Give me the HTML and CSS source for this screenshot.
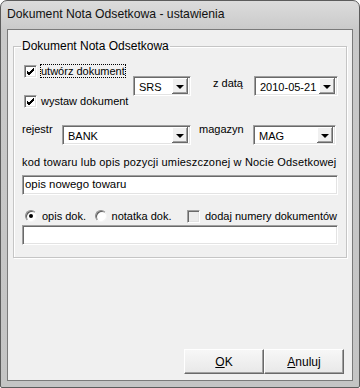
FILE: index.html
```html
<!DOCTYPE html>
<html lang="pl">
<head>
    <meta charset="UTF-8">
    <title>Dokument Nota Odsetkowa - ustawienia</title>
    <link rel="stylesheet" href="styles.css">
</head>
<body>
    <div class="window">
        <div class="titlebar">Dokument Nota Odsetkowa - ustawienia</div>

        <div class="client">
            <fieldset class="group">
                <legend>Dokument Nota Odsetkowa</legend>

                <div class="row row-top">
                    <div class="checks">
                        <div class="check">
                            <span class="box checked"><svg width="9" height="9" viewBox="0 0 9 9"><path d="M1 4 L3 6 L8 1 M1 5 L3 7 L8 2 M1 6 L3 8 L8 3" stroke="#000" stroke-width="1" fill="none"/></svg></span>
                            <span class="text focus">utwórz dokument</span>
                        </div>
                        <div class="check">
                            <span class="box checked"><svg width="9" height="9" viewBox="0 0 9 9"><path d="M1 4 L3 6 L8 1 M1 5 L3 7 L8 2 M1 6 L3 8 L8 3" stroke="#000" stroke-width="1" fill="none"/></svg></span>
                            <span class="text">wystaw dokument</span>
                        </div>
                    </div>
                    <div class="combo combo-srs"><span class="value">SRS</span><span class="drop"></span></div>
                    <span class="lbl lbl-date">z datą</span>
                    <div class="combo combo-date"><span class="value">2010-05-21</span><span class="drop"></span></div>
                </div>

                <div class="row row-reg">
                    <span class="lbl lbl-reg">rejestr</span>
                    <div class="combo combo-bank"><span class="value">BANK</span><span class="drop"></span></div>
                    <span class="lbl lbl-mag">magazyn</span>
                    <div class="combo combo-mag"><span class="value">MAG</span><span class="drop"></span></div>
                </div>

                <div class="caption">kod towaru lub opis pozycji umieszczonej w Nocie Odsetkowej</div>
                <div class="edit">opis nowego towaru</div>

                <div class="row row-opts">
                    <span class="radio on"></span>
                    <span class="text opt-1">opis dok.</span>
                    <span class="radio"></span>
                    <span class="text opt-2">notatka dok.</span>
                    <span class="box box-off"></span>
                    <span class="text">dodaj numery dokumentów</span>
                </div>
                <div class="edit edit-note"></div>
            </fieldset>

            <div class="buttons">
                <button class="btn"><u>O</u>K</button>
                <button class="btn"><u>A</u>nuluj</button>
            </div>
        </div>
    </div>
</body>
</html>
```

FILE: styles.css
```css
body {
    margin: 0;
    background: #fff;
    font-family: "Liberation Sans", Arial, sans-serif;
    font-size: 11px;
    color: #000;
}

.window {
    width: 358px;
    height: 386px;
    border: 1px solid #5c5c5c;
    border-radius: 7px 7px 2px 2px;
    background: linear-gradient(#dcdcdc, #c9c9c9 30px, #c4c4c4);
    display: flex;
    flex-direction: column;
}

.titlebar {
    height: 28px;
    line-height: 27px;
    padding-left: 6px;
    font-size: 12.2px;
    color: #111;
}

.client {
    flex: 1;
    margin: 0 6px 6px 6px;
    border: 1px solid #7a7a7a;
    background: #f0f0f0;
    display: flex;
    flex-direction: column;
}

/* group box */
.group {
    margin: 9px 5px 0 5px;
    padding: 10px 8px 12px 8px;
    border: 1px solid #c5c5c5;
    box-shadow: inset 1px 1px 0 #fff, 1px 1px 0 #fff;
    min-width: 0;
}
.group legend {
    padding: 0 1px;
    margin-left: -1px;
    font-size: 12px;
}

.row {
    display: flex;
    align-items: center;
}

.checks {
    width: 111px;
    display: flex;
    flex-direction: column;
    gap: 14px;
}
.check {
    display: flex;
    align-items: center;
    height: 16px;
}

.box {
    width: 11px;
    height: 11px;
    margin: 0 3px 0 2px;
    background: #fff;
    border: 1px solid;
    border-color: #a0a0a0 #fff #fff #a0a0a0;
    box-shadow: inset 1px 1px 0 #696969, inset -1px -1px 0 #e3e3e3;
    display: flex;
    align-items: center;
    justify-content: center;
    flex-shrink: 0;
}
.box svg {
    display: block;
}
.box-off {
    margin: 0 4px 0 0;
    background: #ececec;
}

.text {
    padding: 1px 1px;
    white-space: nowrap;
}
.focus {
    outline: 1px dotted #000;
    outline-offset: -1px;
}

/* combos */
.combo {
    height: 16px;
    display: flex;
    align-items: center;
    background: #fff;
    border: 1px solid;
    border-color: #a0a0a0 #fff #fff #a0a0a0;
    box-shadow: inset 1px 1px 0 #696969, inset -1px -1px 0 #e3e3e3;
    padding: 1px 2px 1px 2px;
}
.combo .value {
    flex: 1;
    padding: 2px 0 0 3px;
    white-space: nowrap;
    overflow: hidden;
}
.drop {
    width: 16px;
    height: 16px;
    background: #f0f0f0;
    box-shadow: inset -1px -1px 0 #696969, inset 1px 1px 0 #fff, inset -2px -2px 0 #a0a0a0;
    display: flex;
    align-items: center;
    justify-content: center;
    flex-shrink: 0;
}
.drop::before {
    content: '';
    border-left: 4px solid transparent;
    border-right: 4px solid transparent;
    border-top: 4px solid #000;
    margin-top: 1px;
}
.combo-srs {
    width: 52px;
}
.lbl {
    white-space: nowrap;
    align-self: flex-start;
}
.lbl-date {
    width: 41px;
    margin: 0 0 0 22px;
    padding-top: 14px;
}
.combo-date {
    width: 78px;
}

.row-reg {
    margin-top: 14px;
    align-items: flex-start;
}
.row-reg .combo {
    margin-top: 2px;
}
.lbl-reg {
    width: 40px;
}
.combo-bank {
    width: 123px;
}
.lbl-mag {
    width: 54px;
    margin-left: 8px;
}
.combo-mag {
    width: 77px;
}

.caption {
    margin-top: 11px;
    white-space: nowrap;
    letter-spacing: 0.18px;
}

.edit {
    height: 16px;
    margin-top: 7px;
    background: #fff;
    border: 1px solid;
    border-color: #a0a0a0 #fff #fff #a0a0a0;
    box-shadow: inset 1px 1px 0 #696969, inset -1px -1px 0 #e3e3e3;
    padding: 2px 2px 0 2px;
    font-size: 11.4px;
}

.row-opts {
    margin-top: 13px;
    height: 16px;
}
.radio {
    width: 10px;
    height: 10px;
    margin: 0 4px 0 3px;
    border-radius: 50%;
    background: #fff;
    border: 1px solid;
    border-color: #8a8a8a #f4f4f4 #f4f4f4 #8a8a8a;
    box-shadow: inset 1px 1px 0 #5a5a5a;
    position: relative;
    flex-shrink: 0;
}
.radio.on::after {
    content: '';
    position: absolute;
    left: 3px;
    top: 3px;
    width: 4px;
    height: 4px;
    border-radius: 50%;
    background: #000;
}
.opt-1 {
    width: 49px;
}
.opt-2 {
    width: 75px;
}

.edit-note {
    margin-top: 1px;
}

/* buttons */
.buttons {
    margin-top: auto;
    display: flex;
    justify-content: flex-end;
    padding: 0 8px 6px 0;
}
.btn {
    width: 80px;
    height: 25px;
    font-family: "Liberation Sans", Arial, sans-serif;
    font-size: 12px;
    color: #000;
    background: linear-gradient(#f7f7f7, #e8e8e8);
    border: 1px solid;
    border-color: #fff #696969 #696969 #fff;
    box-shadow: inset -1px -1px 0 #a0a0a0;
    padding: 0;
}
```
